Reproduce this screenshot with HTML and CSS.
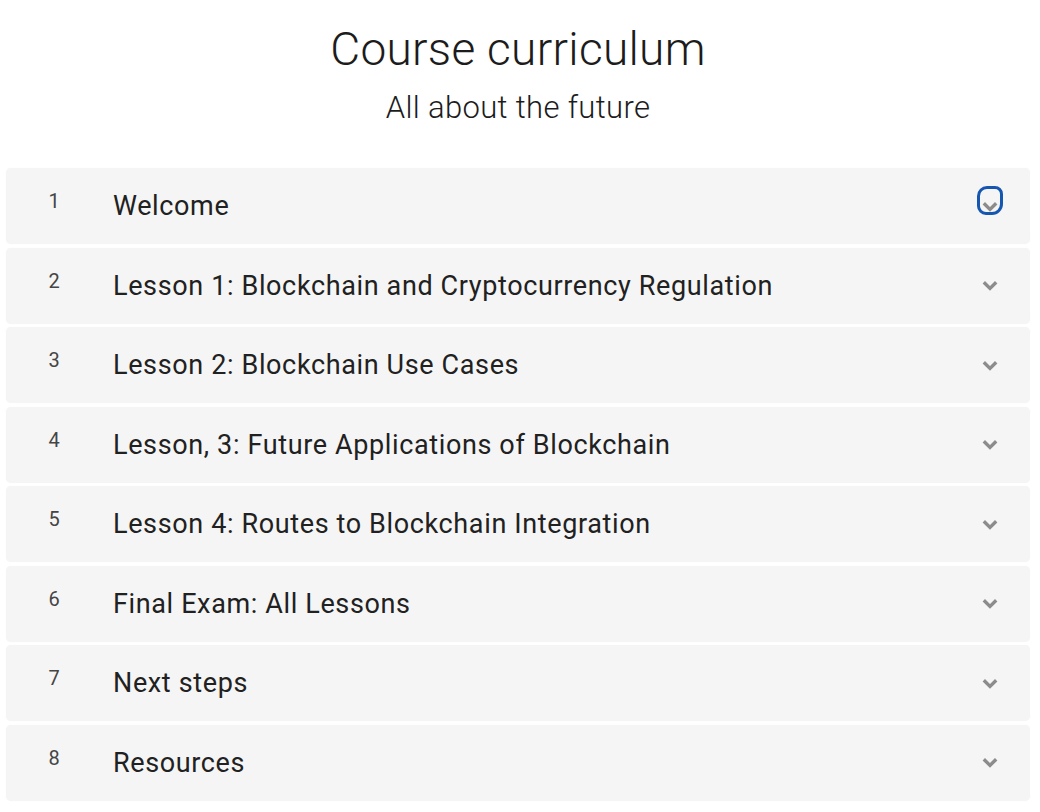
FILE: index.html
```
<html>
  <head>
    <title>Course curriculum</title>
    <link rel="stylesheet" href="styles.css">
  </head>
  <body>
    <div id="curriculum">
      <div class="heading">
        <h1>Course curriculum</h1>
        <p class="sub">All about the future</p>
      </div>
      <div class="lessons">
        <div class="lesson">
          <span class="num">1</span>
          <span class="name">Welcome</span>
          <button class="toggle focused"><svg viewBox="0 0 16 11"><path d="M1.8 2.2 L8 8.4 L14.2 2.2"/></svg></button>
        </div>
        <div class="lesson">
          <span class="num">2</span>
          <span class="name">Lesson 1: Blockchain and Cryptocurrency Regulation</span>
          <button class="toggle"><svg viewBox="0 0 16 11"><path d="M1.8 2.2 L8 8.4 L14.2 2.2"/></svg></button>
        </div>
        <div class="lesson">
          <span class="num">3</span>
          <span class="name">Lesson 2: Blockchain Use Cases</span>
          <button class="toggle"><svg viewBox="0 0 16 11"><path d="M1.8 2.2 L8 8.4 L14.2 2.2"/></svg></button>
        </div>
        <div class="lesson">
          <span class="num">4</span>
          <span class="name">Lesson, 3: Future Applications of Blockchain</span>
          <button class="toggle"><svg viewBox="0 0 16 11"><path d="M1.8 2.2 L8 8.4 L14.2 2.2"/></svg></button>
        </div>
        <div class="lesson">
          <span class="num">5</span>
          <span class="name">Lesson 4: Routes to Blockchain Integration</span>
          <button class="toggle"><svg viewBox="0 0 16 11"><path d="M1.8 2.2 L8 8.4 L14.2 2.2"/></svg></button>
        </div>
        <div class="lesson">
          <span class="num">6</span>
          <span class="name">Final Exam: All Lessons</span>
          <button class="toggle"><svg viewBox="0 0 16 11"><path d="M1.8 2.2 L8 8.4 L14.2 2.2"/></svg></button>
        </div>
        <div class="lesson">
          <span class="num">7</span>
          <span class="name">Next steps</span>
          <button class="toggle"><svg viewBox="0 0 16 11"><path d="M1.8 2.2 L8 8.4 L14.2 2.2"/></svg></button>
        </div>
        <div class="lesson">
          <span class="num">8</span>
          <span class="name">Resources</span>
          <button class="toggle"><svg viewBox="0 0 16 11"><path d="M1.8 2.2 L8 8.4 L14.2 2.2"/></svg></button>
        </div>
      </div>
    </div>
  </body>
</html>
```
FILE: styles.css
```
body{
  margin:0;
  background:white;
  font-family:Roboto,"Liberation Sans",Arial,sans-serif;
  color:#202020;
}

#curriculum{
  width:1024px;
  margin-left:6px;
}

.heading{
  text-align:center;
  padding-top:22px;
}

h1{
  margin:0;
  font-size:46px;
  line-height:55px;
  font-weight:300;
  letter-spacing:0.3px;
  color:#1c1c1c;
}

.sub{
  margin:13px 0 0 0;
  font-size:31px;
  line-height:36px;
  font-weight:300;
  letter-spacing:0.35px;
  color:#1c1c1c;
}

.lessons{
  display:flex;
  flex-direction:column;
  gap:3.5px;
  margin-top:42px;
}

.lesson{
  display:flex;
  align-items:flex-start;
  padding:22px 0 22px 24px;
  background:#f5f5f5;
  border-radius:5px;
  box-shadow:0 0 1px rgba(0,0,0,0.06);
}

.num{
  width:48px;
  margin-top:-1px;
  text-align:center;
  font-size:20px;
  line-height:24px;
  color:#454545;
}

.name{
  flex:1;
  margin-left:35px;
  font-size:27px;
  line-height:32px;
  letter-spacing:0.63px;
  color:#212121;
}

.toggle{
  width:22px;
  height:25px;
  margin:-2px 29px 0 0;
  padding:0;
  border:none;
  background:none;
  display:flex;
  align-items:center;
  justify-content:center;
  border-radius:8px 6px 9px 7px;
}

.toggle svg{
  width:16px;
  height:11px;
  margin-top:11px;
  fill:none;
  stroke:#8c8c8c;
  stroke-width:3.4;
}

.focused{
  outline:3px solid #1557b0;
  outline-offset:-1px;
}
```
